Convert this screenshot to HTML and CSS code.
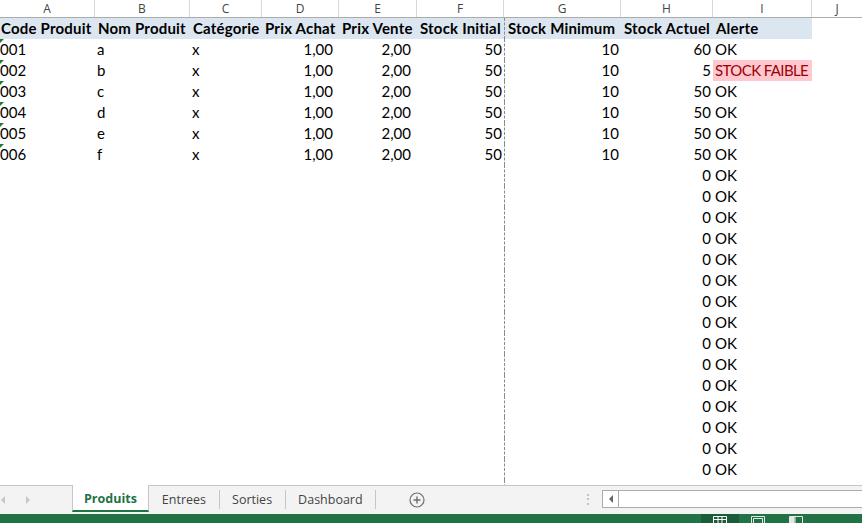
FILE: index.html
```html
<!DOCTYPE html>
<html>
<head>
    <meta charset="utf-8">
    <title>Stock - Produits</title>
    <link rel="stylesheet" href="styles.css">
</head>
<body>

<div class="sheet">
    <div class="colHeads">
        <div>A</div><div>B</div><div>C</div><div>D</div><div>E</div>
        <div>F</div><div>G</div><div>H</div><div>I</div><div>J</div>
    </div>

    <div class="grid" id="grid">
        <div class="row headRow">
            <div class="cell a">Code Produit</div>
            <div class="cell">Nom Produit</div>
            <div class="cell">Catégorie</div>
            <div class="cell">Prix Achat</div>
            <div class="cell">Prix Vente</div>
            <div class="cell">Stock Initial</div>
            <div class="cell g">Stock Minimum</div>
            <div class="cell">Stock Actuel</div>
            <div class="cell">Alerte</div>
            <div class="cell blank"></div>
        </div>
    </div>
</div>

<div class="tabBar">
    <div class="tabArea">
        <div class="tabNav">
            <span class="navArrow left"></span>
            <span class="navArrow right"></span>
        </div>
        <div class="tabs">
            <div class="tab active">Produits</div>
            <div class="tab">Entrees</div>
            <div class="tab">Sorties</div>
            <div class="tab">Dashboard</div>
        </div>
        <div class="addSheet">
            <svg width="16" height="16" viewBox="0 0 16 16">
                <circle cx="8" cy="8" r="7" fill="none" stroke="#6d6d6d" stroke-width="1.2"/>
                <path d="M8 4.5v7M4.5 8h7" stroke="#6d6d6d" stroke-width="1.4"/>
            </svg>
        </div>
    </div>
    <div class="splitter">&#8942;</div>
    <div class="hScroll">
        <div class="scrollBtn"><span class="navArrow left dark"></span></div>
        <div class="scrollTrack"></div>
    </div>
</div>

<div class="statusBar">
    <div class="views">
        <div class="view selected">
            <svg width="14" height="8" viewBox="0 0 14 8">
                <path d="M0.5 8V0.5h13V8M0.5 3.5h13M5 0.5V8M9 0.5V8" fill="none" stroke="#fff"/>
            </svg>
        </div>
        <div class="view">
            <svg width="14" height="8" viewBox="0 0 14 8">
                <path d="M0.5 8V0.5h13V8M2.5 8V2.5h9V8" fill="none" stroke="#e6e6e6"/>
            </svg>
        </div>
        <div class="view">
            <svg width="14" height="8" viewBox="0 0 14 8">
                <path d="M0.5 8V0.5h13V8M6 0.5V8" fill="none" stroke="#e6e6e6"/>
                <rect x="1" y="1" width="4.5" height="7" fill="#e6e6e6"/>
            </svg>
        </div>
    </div>
</div>

<script src="sheet.js"></script>
</body>
</html>
```

FILE: sheet.js
```js
var produits = [
    ['001', 'a', 'x', '1,00', '2,00', 50, 10, 60],
    ['002', 'b', 'x', '1,00', '2,00', 50, 10, 5],
    ['003', 'c', 'x', '1,00', '2,00', 50, 10, 50],
    ['004', 'd', 'x', '1,00', '2,00', 50, 10, 50],
    ['005', 'e', 'x', '1,00', '2,00', 50, 10, 50],
    ['006', 'f', 'x', '1,00', '2,00', 50, 10, 50]
];

var grid = document.getElementById('grid');

function cell(text, cls) {
    var d = document.createElement('div');
    d.className = 'cell' + (cls ? ' ' + cls : '');
    d.textContent = text;
    return d;
}

// formula rows keep going below the data: empty stock = 0, alert OK
for (var i = 0; i < 22; i++) {
    var p = produits[i] || ['', '', '', '', '', '', '', 0];
    var row = document.createElement('div');
    row.className = 'row';

    var low = p[6] !== '' && p[7] < p[6];

    row.appendChild(cell(p[0], 'a' + (p[0] ? ' txtNum' : '')));
    row.appendChild(cell(p[1]));
    row.appendChild(cell(p[2]));
    row.appendChild(cell(p[3], 'num money'));
    row.appendChild(cell(p[4], 'num money'));
    row.appendChild(cell(p[5], 'num'));
    row.appendChild(cell(p[6], 'num g'));
    row.appendChild(cell(p[7], 'num'));
    row.appendChild(cell(low ? 'STOCK FAIBLE' : 'OK', low ? 'alert' : ''));
    row.appendChild(cell('', 'blank'));

    grid.appendChild(row);
}
```

FILE: styles.css
```css
html, body {
    margin: 0;
    padding: 0;
}

body {
    width: 862px;
    height: 523px;
    overflow: hidden;
    display: flex;
    flex-direction: column;
    background: #fff;
    font-family: "Lato", "Liberation Sans", sans-serif;
}

.sheet {
    flex: 1;
    overflow: hidden;
    min-height: 0;
}

/* column letters */
.colHeads {
    display: grid;
    grid-template-columns: 95px 95px 72px 77px 78px 87px 117px 92px 99px 1fr;
    height: 18px;
    border-bottom: 1px solid #ababab;
    box-sizing: border-box;
    margin-left: -1px;
}

.colHeads div {
    border-left: 1px solid #d8d8d8;
    text-align: center;
    font-family: "Open Sans", "Liberation Sans", sans-serif;
    font-size: 12px;
    line-height: 17px;
    color: #444;
}

.row {
    display: grid;
    grid-template-columns: 95px 95px 72px 77px 78px 87px 117px 92px 99px 1fr;
    height: 21px;
}

.cell {
    position: relative;
    padding: 0 2px;
    font-size: 15px;
    line-height: 21px;
    color: #000;
    white-space: nowrap;
    overflow: hidden;
}

.cell.a {
    padding-left: 0;
}

.cell.num {
    text-align: right;
}

.cell.money {
    padding-right: 6px;
}

/* page break between F and G */
.cell.g {
    border-left: 1px dashed #8c8c8c;
}

.headRow .cell {
    background: #dce6f1;
    font-weight: bold;
    padding-left: 3px;
    letter-spacing: 0.2px;
}

.headRow .cell.a {
    padding-left: 1px;
}

.headRow .cell.blank {
    background: none;
}

.cell.alert {
    background: #ffc7ce;
    color: #9c0006;
    letter-spacing: -0.6px;
}

/* number stored as text marker */
.txtNum::before {
    content: "";
    position: absolute;
    top: 0;
    left: 0;
    border-top: 4px solid #1e7b34;
    border-right: 4px solid transparent;
}

/* sheet tabs */
.tabBar {
    height: 28px;
    flex: none;
    display: flex;
    align-items: stretch;
    background: #f3f3f3;
    border-top: 1px solid #c6c6c6;
    font-family: "Open Sans", "Liberation Sans", sans-serif;
    font-size: 12.5px;
    color: #444;
}

.tabArea {
    width: 578px;
    display: flex;
    align-items: stretch;
}

.tabNav {
    width: 72px;
    display: flex;
    align-items: center;
    gap: 21px;
    padding-left: 1px;
    box-sizing: border-box;
}

.navArrow {
    width: 0;
    height: 0;
    border-top: 4px solid transparent;
    border-bottom: 4px solid transparent;
}

.navArrow.left {
    border-right: 4px solid #c8c8c8;
}

.navArrow.right {
    border-left: 4px solid #c8c8c8;
}

.navArrow.dark {
    border-right-color: #666;
}

.tabs {
    display: flex;
    align-items: stretch;
}

.tab {
    padding: 2px 13px 0;
    line-height: 24px;
    position: relative;
    white-space: nowrap;
}

.tab + .tab::before {
    content: "";
    position: absolute;
    left: 0;
    top: 4px;
    bottom: 5px;
    border-left: 1px solid #c6c6c6;
}

.tab.active {
    background: #fff;
    color: #217346;
    font-weight: bold;
    border-left: 1px solid #c6c6c6;
    border-right: 1px solid #c6c6c6;
    margin-top: -1px;
    margin-bottom: 2px;
    border-bottom: 2px solid #217346;
    padding: 3px 11px 0;
    line-height: 21px;
}

.tab.active + .tab::before {
    display: none;
}

.tabs .tab:last-child::after {
    content: "";
    position: absolute;
    right: 0;
    top: 4px;
    bottom: 5px;
    border-left: 1px solid #c6c6c6;
}

.addSheet {
    margin-left: 33px;
    display: flex;
    align-items: center;
}

.splitter {
    width: 24px;
    color: #b5b5b5;
    font-size: 14px;
    line-height: 26px;
    padding-left: 3px;
    box-sizing: border-box;
}

.hScroll {
    flex: 1;
    display: flex;
    align-self: center;
    height: 16px;
    margin-top: -2px;
    border: 1px solid #ababab;
    border-right: none;
    background: #fff;
}

.scrollBtn {
    width: 15px;
    border-right: 1px solid #ababab;
    display: flex;
    align-items: center;
    justify-content: center;
}

.scrollTrack {
    flex: 1;
}

/* status bar */
.statusBar {
    height: 9px;
    flex: none;
    background: #217346;
    overflow: hidden;
    display: flex;
    justify-content: flex-end;
}

.views {
    display: flex;
    margin-right: 47px;
}

.view {
    width: 38px;
    display: flex;
    justify-content: center;
    padding-top: 2px;
}

.view.selected {
    background: #1a5c37;
}
```
